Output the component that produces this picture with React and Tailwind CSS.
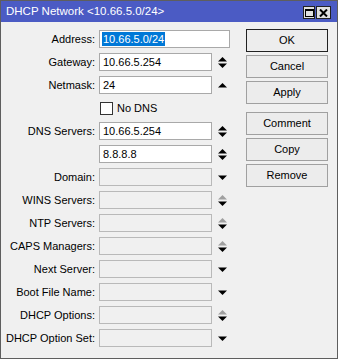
import React from 'react'

const rows = [
  { label: 'Address:', value: '10.66.5.0/24', selected: true, wide: true },
  { label: 'Gateway:', value: '10.66.5.254', arrow: 'both' },
  { label: 'Netmask:', value: '24', arrow: 'up' },
  { check: 'No DNS' },
  { label: 'DNS Servers:', value: '10.66.5.254', arrow: 'both' },
  { label: '', value: '8.8.8.8', arrow: 'both' },
  { label: 'Domain:', disabled: true, arrow: 'down' },
  { label: 'WINS Servers:', disabled: true, arrow: 'grayboth' },
  { label: 'NTP Servers:', disabled: true, arrow: 'grayboth' },
  { label: 'CAPS Managers:', disabled: true, arrow: 'grayboth' },
  { label: 'Next Server:', disabled: true, arrow: 'down' },
  { label: 'Boot File Name:', disabled: true, arrow: 'down' },
  { label: 'DHCP Options:', disabled: true, arrow: 'grayboth' },
  { label: 'DHCP Option Set:', disabled: true, arrow: 'down' },
]

const buttons = [
  { name: 'OK', primary: true },
  { name: 'Cancel' },
  { name: 'Apply' },
  { name: 'Comment', gap: true },
  { name: 'Copy' },
  { name: 'Remove' },
]

function Arrow({ kind }) {
  return (
    <svg width="9" height="11" viewBox="0 0 9 11" className="ml-[6px] shrink-0">
      {kind === 'up' && <polygon points="0,7.5 4.5,3 9,7.5" fill="#000" />}
      {kind === 'down' && <polygon points="0,3.5 9,3.5 4.5,8" fill="#000" />}
      {(kind === 'both' || kind === 'grayboth') && (
        <>
          <polygon points="0,4.5 4.5,0 9,4.5" fill={kind === 'both' ? '#000' : '#a0a0a0'} />
          <polygon points="0,6.5 9,6.5 4.5,11" fill="#000" />
        </>
      )}
    </svg>
  )
}

function Row({ row }) {
  if (row.check) {
    return (
      <div className="flex items-center h-[18px] mt-[5px]">
        <div className="w-[94px] shrink-0" />
        <div className="ml-[5px] w-[13px] h-[13px] bg-white border border-[#333]" />
        <span className="ml-[4px]">{row.check}</span>
      </div>
    )
  }
  return (
    <div className="flex items-center h-[18px] mt-[5px] first:mt-0">
      <div className="w-[94px] shrink-0 text-right whitespace-nowrap">{row.label}</div>
      <div
        className={`ml-[4px] h-[18px] border flex items-center px-[2px] ${
          row.wide ? 'w-[131px]' : 'w-[113px]'
        } ${row.disabled ? 'bg-[#f0f0f0] border-[#b9b9b9]' : 'bg-white border-[#a9a9a9]'}`}
      >
        {row.selected ? (
          <span className="bg-[#0078d7] text-white px-[1px] leading-[14px]">{row.value}</span>
        ) : (
          <span className="pl-[1px]">{row.value}</span>
        )}
      </div>
      {row.arrow && <Arrow kind={row.arrow} />}
    </div>
  )
}

export default function App() {
  return (
    <div className="w-[338px] h-[359px] bg-[#f0f0f0] border border-[#5e5e5e] font-['Liberation_Sans',Arial,sans-serif] text-[11px] text-black flex flex-col overflow-hidden">
      <div className="h-[21px] bg-[#4b5bc4] flex items-center justify-between pl-[5px] pr-[6px] shrink-0">
        <span className="text-white text-[11.5px]">DHCP Network &lt;10.66.5.0/24&gt;</span>
        <div className="flex gap-[1px] mt-[2px]">
          <div className="w-[12px] h-[13px] bg-[#e0e0e0] border border-[#222] flex items-center justify-center">
            <div className="w-[9px] h-[8px] border border-black border-t-2" />
          </div>
          <div className="w-[15px] h-[13px] bg-[#e0e0e0] border border-[#222] flex items-center justify-center">
            <svg width="9" height="8" viewBox="0 0 9 8">
              <path d="M1 0.5 L8 7.5 M8 0.5 L1 7.5" stroke="#000" strokeWidth="2" />
            </svg>
          </div>
        </div>
      </div>
      <div className="flex flex-1">
        <div className="w-[245px] pt-[8px] flex flex-col">
          {rows.map((r, i) => (
            <Row key={i} row={r} />
          ))}
        </div>
        <div className="pt-[7px] flex flex-col">
          {buttons.map((b) => (
            <div
              key={b.name}
              className={`w-[82px] h-[23px] flex items-center justify-center ${
                b.gap ? 'mt-[8px]' : b.primary ? '' : 'mt-[3px]'
              } ${b.primary ? 'border border-[#222] bg-[#ededed]' : 'border border-[#a0a0a0] bg-[#ececec]'}`}
            >
              {b.name}
            </div>
          ))}
        </div>
      </div>
    </div>
  )
}
